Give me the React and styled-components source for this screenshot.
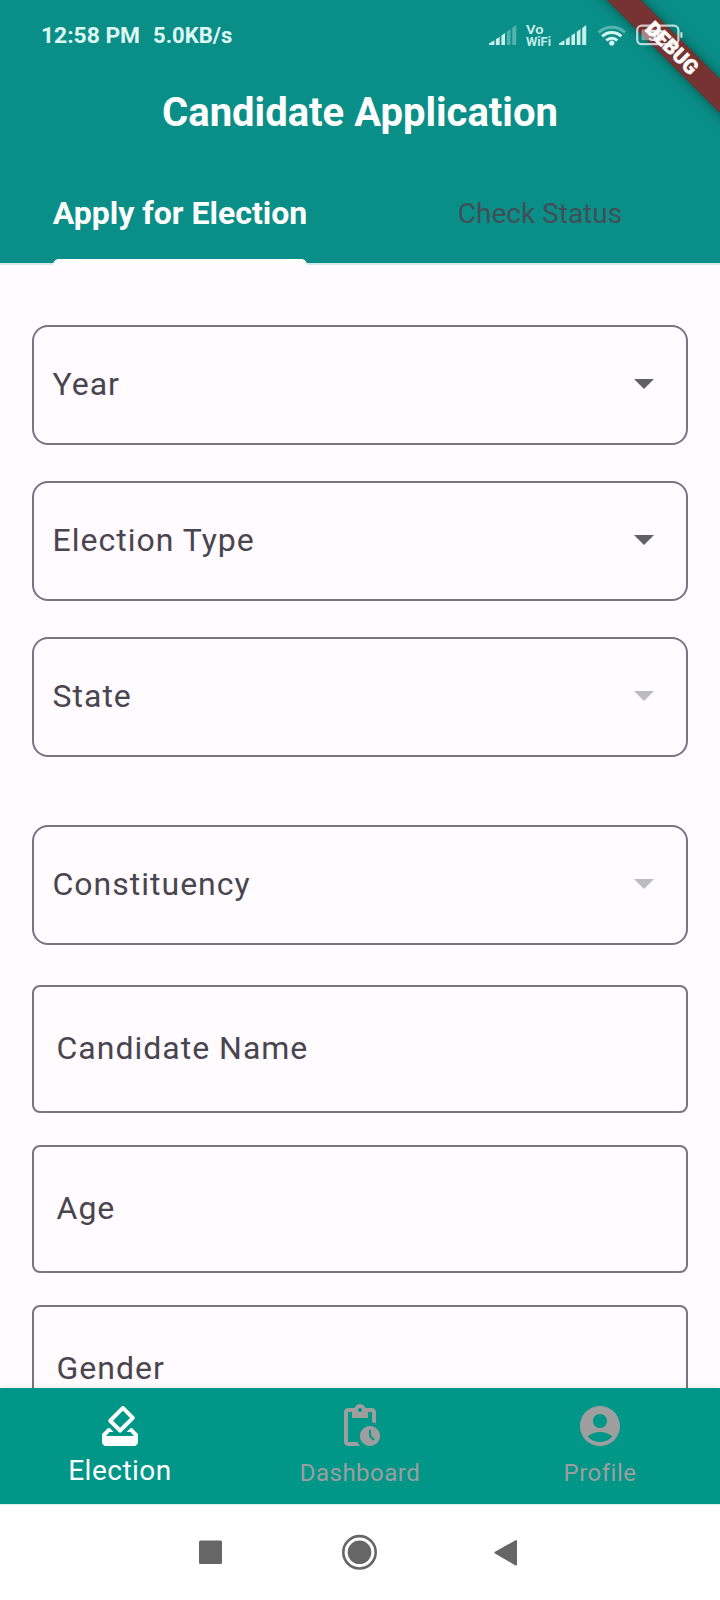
import React from "react";
import styled, { createGlobalStyle } from "styled-components";

const Global = createGlobalStyle`
  *, *::before, *::after { box-sizing: border-box; }
  html, body { margin: 0; padding: 0; background: #fffbff; }
  body { font-family: Roboto, "Liberation Sans", sans-serif; }
`;

const Screen = styled.div`
  position: relative;
  width: 720px;
  height: 1600px;
  overflow: hidden;
  display: flex;
  flex-direction: column;
  background: #fffbff;
`;

const Header = styled.header`
  flex: none;
  height: 265px;
  background: #0a8f88;
  display: flex;
  flex-direction: column;
`;

const StatusBar = styled.div`
  position: relative;
  z-index: 2;
  height: 70px;
  padding: 0 37px 0 41px;
  display: flex;
  align-items: center;
  justify-content: space-between;
  color: #dff8f4;
`;

const StatusText = styled.div`
  display: flex;
  align-items: baseline;
  gap: 13px;
  padding-top: 2px;
  font-size: 22.8px;
  font-weight: 700;
  line-height: 30px;
  white-space: nowrap;
`;

const Speed = styled.span`
  font-size: 22px;
`;

const StatusIcons = styled.svg`
  display: block;
  flex: none;
`;

const Title = styled.h1`
  margin: 0;
  height: 84px;
  line-height: 86px;
  text-align: center;
  font-size: 40px;
  font-weight: 700;
  color: #fff;
`;

const Tabs = styled.nav`
  height: 111px;
  display: grid;
  grid-template-columns: 1fr 1fr;
  background: linear-gradient(#cde9ec, #cde9ec) left bottom / 100% 2px no-repeat;
`;

const Tab = styled.div`
  display: flex;
  justify-content: center;
  white-space: nowrap;
  font-size: ${(p) => (p.$active ? "32px" : "28px")};
  font-weight: ${(p) => (p.$active ? 700 : 400)};
  color: ${(p) => (p.$active ? "#fff" : "rgba(73, 69, 79, 0.88)")};
`;

const TabLabel = styled.span`
  display: flex;
  flex-direction: column;
  line-height: 105px;
  padding-top: 7px;
  height: 111px;
  background: ${(p) => (p.$active ? "radial-gradient(circle at 6px 6px, #fff 5.7px, transparent 6.3px) left bottom / 6px 6px no-repeat, radial-gradient(circle at 0 6px, #fff 5.7px, transparent 6.3px) right bottom / 6px 6px no-repeat, linear-gradient(#fff, #fff) center bottom / calc(100% - 12px) 6px no-repeat" : "none")};
`;

const Form = styled.main`
  flex: 1;
  min-height: 0;
  overflow: hidden;
  padding: 60px 32px 0;
  display: flex;
  flex-direction: column;
`;

const Field = styled.div`
  flex: none;
  display: flex;
  align-items: center;
  justify-content: space-between;
  height: 128px;
  margin-bottom: 32px;
  padding: 0 22.5px 2px;
  border: 2px solid #79747e;
  border-radius: 8px;
  font-size: 32px;
  letter-spacing: 1px;
  color: #49454f;
`;

const SelectField = styled(Field)`
  height: 120px;
  margin-bottom: ${(p) => p.$gap}px;
  padding: 0 32px 2px 18.5px;
  border-radius: 16px;
`;

const Arrow = styled.svg`
  display: block;
  fill: ${(p) => (p.$disabled ? "#bdbdbd" : "#616161")};
`;

const BottomNav = styled.nav`
  position: relative;
  flex: none;
  height: 116px;
  display: grid;
  grid-template-columns: repeat(3, 1fr);
  background: #009688;
  box-shadow: 0 0 8px rgba(0, 0, 0, 0.1);
`;

const NavItem = styled.div`
  display: flex;
  flex-direction: column;
  align-items: center;
  padding-top: 14px;
  color: ${(p) => (p.$active ? "#fff" : "#9e9e9e")};
`;

const NavIcon = styled.svg`
  display: block;
  width: 48px;
  height: 48px;
  fill: currentColor;
`;

const NavLabel = styled.span`
  line-height: 40px;
  font-size: ${(p) => (p.$active ? "28px" : "24px")};
  letter-spacing: 0.5px;
  margin-top: ${(p) => (p.$active ? "1px" : "3px")};
`;

const SystemBar = styled.footer`
  position: relative;
  flex: none;
  height: 96px;
  border-top: 1px solid #d5f0ee;
  background: #fff;
  display: flex;
  justify-content: center;
  align-items: center;
  padding: 0 4px 1px 0;
`;

const Banner = styled.div`
  position: absolute;
  top: 36px;
  left: 572px;
  width: 200px;
  height: 24px;
  transform: rotate(45deg);
  background: linear-gradient(rgba(183, 28, 28, 0.627), rgba(183, 28, 28, 0.627)), rgba(0, 0, 0, 0.38);
  box-shadow: 0 0 13px rgba(0, 0, 0, 0.45);
  color: #fff;
  font-size: 20.4px;
  font-weight: 900;
  line-height: 24px;
  text-align: center;
  -webkit-text-stroke: 0.4px #fff;
`;

const navItems = [
  {
    label: "Election",
    active: true,
    path: "M18 13h-.68l-2 2h1.91L19 17H5l1.78-2h2.05l-2-2H6l-3 3v4c0 1.1.89 2 1.99 2H19c1.1 0 2-.89 2-2v-4l-3-3zm-1-5.05l-4.95 4.95-3.54-3.54 4.95-4.95L17 7.95zm-4.24-5.66L6.39 8.66c-.39.39-.39 1.02 0 1.41l4.95 4.95c.39.39 1.02.39 1.41 0l6.36-6.36c.39-.39.39-1.02 0-1.41L14.16 2.3c-.38-.4-1.01-.4-1.4-.01z",
  },
  {
    label: "Dashboard",
    path: "M17 12c-2.76 0-5 2.24-5 5s2.24 5 5 5 5-2.24 5-5-2.24-5-5-5zm1.65 7.35L16.5 17.2V14h1v2.79l1.85 1.85-.7.71zM18 3h-3.18C14.4 1.84 13.3 1 12 1s-2.4.84-2.82 2H6c-1.1 0-2 .9-2 2v15c0 1.1.9 2 2 2h6.11c-.59-.57-1.07-1.25-1.42-2H6V5h2v3h8V5h2v5.08c.71.1 1.38.31 2 .6V5c0-1.1-.9-2-2-2zm-6 2c-.55 0-1-.45-1-1s.45-1 1-1 1 .45 1 1-.45 1-1 1z",
  },
  {
    label: "Profile",
    path: "M12 2C6.48 2 2 6.48 2 12s4.48 10 10 10 10-4.48 10-10S17.52 2 12 2zm0 4c1.93 0 3.5 1.57 3.5 3.5S13.93 13 12 13s-3.5-1.57-3.5-3.5S10.07 6 12 6zm0 14c-2.03 0-4.43-.82-6.14-2.88C7.55 15.8 9.68 15 12 15s4.45.8 6.14 2.12C16.43 19.18 14.03 20 12 20z",
  },
];

const selects = [
  { label: "Year", gap: 36 },
  { label: "Election Type", gap: 36 },
  { label: "State", gap: 68, disabled: true },
  { label: "Constituency", gap: 40, disabled: true },
];

const bars = [
  "M0 20v-1.5l5.4-3.3v4.8z",
  "M6.9 20v-5.8l3.8-2.4v8.2z",
  "M12.4 20v-9.6l3.6-2.4v12z",
  "M17.8 20v-13.3l3.7-2.6v15.9z",
  "M23.2 20v-17l4-3v20z",
];

function Signal({ x, strength }) {
  return (
    <g transform={`translate(${x} 25)`} fill="#c8f0eb">
      {bars.map((d, i) => (
        <path key={d} d={d} opacity={i < strength ? 1 : 0.38} />
      ))}
    </g>
  );
}

function StatusGlyphs() {
  return (
    <StatusIcons width="196" height="70" viewBox="487 0 196 70">
      <Signal x={489} strength={3} />
      <g fill="#cdf2ee" fontFamily="Roboto, sans-serif" fontWeight="600" fontSize="13">
        <text x="526" y="33.5" fontSize="12.5" textLength="17.5" lengthAdjust="spacingAndGlyphs">Vo</text>
        <text x="526" y="45.5" textLength="25" lengthAdjust="spacingAndGlyphs">WiFi</text>
      </g>
      <Signal x={559} strength={5} />
      <g fill="none" stroke="#d5f5f1" strokeWidth="3">
        <path d="M598.6 32.5a19 19 0 0 1 26.4 0" opacity=".38" />
        <path d="M602.2 36.4a13.6 13.6 0 0 1 19.2 0" />
        <path d="M606.3 40.5a7.8 7.8 0 0 1 11 0" />
      </g>
      <circle cx="611.8" cy="43" r="2.6" fill="#d5f5f1" />
      <rect x="637.2" y="25.6" width="41.2" height="18.6" rx="4.5" fill="none" stroke="#fff" strokeOpacity="0.72" strokeWidth="2.2" />
      <rect x="641.5" y="29.5" width="20" height="10.8" rx="1.5" fill="#fff" fillOpacity="0.4" />
      <rect x="680.3" y="32" width="2.2" height="6" rx="1" fill="#fff" fillOpacity="0.75" />
      <text x="648" y="40.5" fontSize="15" fontWeight="700" fontFamily="Roboto, sans-serif" fill="#fff" fillOpacity="0.8">59</text>
    </StatusIcons>
  );
}

export default function App() {
  return (
    <Screen>
      <Global />
      <Header>
        <StatusBar>
          <StatusText>
            <span>12:58 PM</span>
            <Speed>5.0KB/s</Speed>
          </StatusText>
          <StatusGlyphs />
        </StatusBar>
        <Title>Candidate Application</Title>
        <Tabs>
          <Tab $active>
            <TabLabel $active>Apply for Election</TabLabel>
          </Tab>
          <Tab>
            <TabLabel>Check Status</TabLabel>
          </Tab>
        </Tabs>
      </Header>
      <Form>
        {selects.map((s) => (
          <SelectField key={s.label} $gap={s.gap}>
            {s.label}
            <Arrow $disabled={s.disabled} width="20" height="10" viewBox="0 0 20 10">
              <path d="M0 0h20L10 10z" />
            </Arrow>
          </SelectField>
        ))}
        <Field>Candidate Name</Field>
        <Field>Age</Field>
        <Field>Gender</Field>
      </Form>
      <BottomNav>
        {navItems.map((n) => (
          <NavItem key={n.label} $active={n.active}>
            <NavIcon viewBox="0 0 24 24">
              <path d={n.path} />
            </NavIcon>
            <NavLabel $active={n.active}>{n.label}</NavLabel>
          </NavItem>
        ))}
      </BottomNav>
      <SystemBar>
        <svg width="320" height="36" viewBox="198 1534 320 36" fill="#666">
          <rect x="199" y="1540.5" width="23" height="23.5" rx="1.5" />
          <circle cx="359.5" cy="1552.3" r="11.8" />
          <circle cx="359.5" cy="1552.3" r="16.2" fill="none" stroke="#666" strokeWidth="2.6" />
          <path d="M495.5 1552.6L516 1541v23.6z" stroke="#666" strokeWidth="2" strokeLinejoin="round" />
        </svg>
      </SystemBar>
      <Banner>DEBUG</Banner>
    </Screen>
  );
}
